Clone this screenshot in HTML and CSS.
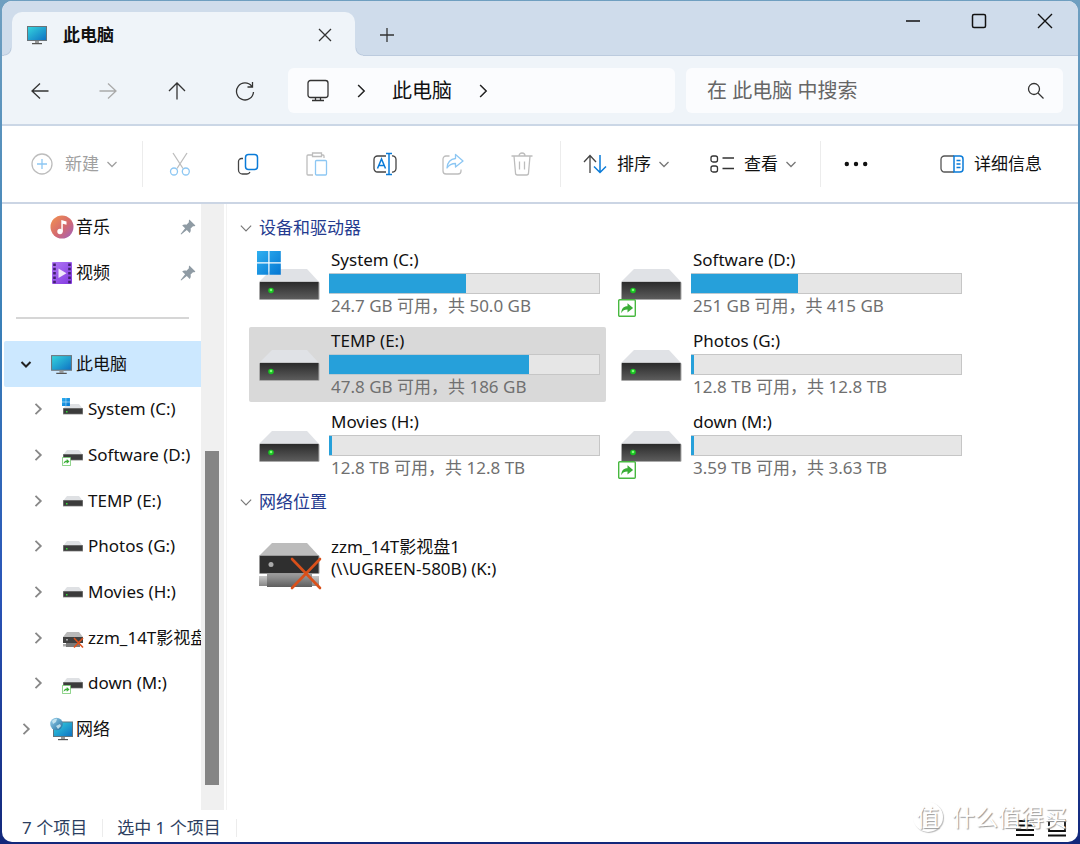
FILE: index.html
```html
<!DOCTYPE html>
<html lang="zh-CN">
<head>
<meta charset="utf-8">
<meta name="viewport" content="width=device-width, initial-scale=1">
<title>此电脑</title>
<link rel="stylesheet" href="styles.css">
</head>
<body>
<svg class="sprite" aria-hidden="true">
  <defs>
    <linearGradient id="screen" x1="0" y1="0" x2="1" y2="1"><stop offset="0" stop-color="#34d3dd"/><stop offset="1" stop-color="#0f73c4"/></linearGradient>
    <linearGradient id="front" x1="0" y1="0" x2="0" y2="1"><stop offset="0" stop-color="#2b2b2b"/><stop offset="1" stop-color="#5c5c5c"/></linearGradient>
    <linearGradient id="win" x1="0" y1="0" x2="1" y2="1"><stop offset="0" stop-color="#2fb0f0"/><stop offset="1" stop-color="#0476d2"/></linearGradient>
    <linearGradient id="music" x1="0" y1="0" x2="1" y2="1"><stop offset="0" stop-color="#f3944f"/><stop offset=".55" stop-color="#d4696f"/><stop offset="1" stop-color="#9c62c4"/></linearGradient>
    <linearGradient id="video" x1="0" y1="0" x2="1" y2="1"><stop offset="0" stop-color="#b078f5"/><stop offset="1" stop-color="#8238e0"/></linearGradient>
    <linearGradient id="pipe" x1="0" y1="0" x2="0" y2="1"><stop offset="0" stop-color="#9c9c9c"/><stop offset=".3" stop-color="#8c8c8c"/><stop offset="1" stop-color="#5e5e5e"/></linearGradient>
    <linearGradient id="pipe-end" x1="0" y1="0" x2="0" y2="1"><stop offset="0" stop-color="#c9c9c9"/><stop offset="1" stop-color="#888"/></linearGradient>
    <linearGradient id="globe" x1="0" y1="0" x2="1" y2="1"><stop offset="0" stop-color="#9fd4ee"/><stop offset="1" stop-color="#1b6c9e"/></linearGradient>
  </defs>
  <symbol id="i-pc" viewBox="0 0 22 22"><rect x="1" y="2" width="20" height="15" fill="#6a7379"/><rect x="2" y="3" width="18" height="13" fill="url(#screen)"/><path d="M9 17h4v2H9z" fill="#999"/><path d="M6 19h10v1.2H6z" fill="#555"/></symbol>
  <symbol id="i-drive" viewBox="0 0 80 75"><path d="M23 23h35l12 13H10z" fill="#e0e2e6"/><rect x="10" y="35.500" width="60.500" height="18.500" rx="1.500" fill="#a9a9a9"/><rect x="11" y="36" width="58.500" height="17" fill="url(#front)"/><circle cx="22" cy="44.500" r="2.800" fill="#19c322"/><circle cx="22" cy="44" r="1.300" fill="#7dff77"/></symbol>
  <symbol id="i-winlogo" viewBox="0 0 24 24"><path fill="url(#win)" d="M0 0h11.300v11.300H0zM12.500 0h11.300v11.300H12.500zM0 12.500h11.300v11.300H0zM12.500 12.500h11.300v11.300H12.500z"/></symbol>
  <symbol id="i-badge" viewBox="0 0 18 18"><rect x=".7" y=".7" width="16.600" height="16.600" rx="1" fill="#fff" stroke="#48b840" stroke-width="1.400"/><path d="M3.200 14.200c.2-4.400 2.300-7 6.300-7V4.200l5.600 4.700-5.600 4.700v-3c-3 0-4.900 1-6.300 3.600z" fill="#3aae36"/></symbol>
  <symbol id="i-netdrive" viewBox="0 0 80 75"><path d="M23 23h35l12 13H10z" fill="#bcbcbc"/><rect x="10" y="35" width="60.500" height="19" rx="1.500" fill="#999"/><rect x="11" y="36" width="58.500" height="17" fill="#2f2f2f"/><circle cx="22" cy="44.500" r="2.500" fill="#aaa"/><path d="M10 56h8v10h-8zM63 56h7v10h-7z" fill="url(#pipe-end)"/><path d="M18 54h45v13H18z" fill="url(#pipe)"/><path d="M43 39l28 29M71 39L43 68" stroke="#d9501a" stroke-width="2.600" stroke-linecap="round"/></symbol>
  <symbol id="i-drive-s" viewBox="0 0 24 24"><path d="M5 7h12l4 5H1z" fill="#dfe1e4"/><rect x="1" y="11" width="20" height="6.500" fill="#999"/><rect x="1.500" y="11.500" width="19" height="5.300" fill="#3b3b3b"/><path d="M4 14h1.500v1.500H4z" fill="#35dd3a"/></symbol>
  <symbol id="i-netdrive-s" viewBox="0 0 24 24"><path d="M5 6h12l4 5H1z" fill="#b9b9b9"/><path d="M1 11h20v6H1z" fill="#404040"/><path d="M4 13h2v1.500H4z" fill="#aaa"/><path d="M1 18h3v2.500H1z" fill="#aaa"/><path d="M4 17h14v4H4z" fill="#7a7a7a"/><path d="M12 12l9 9.500M21 12l-9 9.500" stroke="#e0521c" stroke-width="1.600"/></symbol>
  <symbol id="i-chev-d" viewBox="0 0 14 14"><path d="M2.500 5L7 9.500 11.500 5" fill="none" stroke="currentColor"/></symbol>
  <symbol id="i-chev-r" viewBox="0 0 14 14"><path d="M4.500 1.800L9.800 7l-5.300 5.200" fill="none" stroke="currentColor"/></symbol>
  <symbol id="i-pin" viewBox="0 0 16 16"><path d="M9.300.6l6.100 5.800c-.6.700-1.500.9-2.400.8L10.600 9.600c.4 2 .1 3.400-.9 4.300L6.800 11 1.200 15.400l-.6-.5 4.500-5.600L2.200 6.500c1-1 2.400-1.300 4.300-.8l2.400-2.500c-.2-1-.1-1.900.4-2.600z" fill="#8f9ba4"/></symbol>
</svg>

<div class="window">
  <header class="titlebar">
    <div class="tab">
      <svg class="ic22"><use href="#i-pc"/></svg>
      <h1 class="tab-title">此电脑</h1>
      <button class="icon-btn tab-close" aria-label="关闭标签页"><svg width="14" height="14" viewBox="0 0 14 14"><path d="M1 1l12 12M13 1L1 13"/></svg></button>
    </div>
    <button class="icon-btn new-tab" aria-label="新标签页"><svg width="14" height="14" viewBox="0 0 14 14"><path d="M7 0v14M0 7h14"/></svg></button>
    <div class="caption">
      <button class="icon-btn" aria-label="最小化"><svg width="16" height="16" viewBox="0 0 16 16"><path d="M1 8h14" stroke-width="1.500"/></svg></button>
      <button class="icon-btn" aria-label="最大化"><svg width="16" height="16" viewBox="0 0 16 16"><rect x="1.500" y="1.500" width="13" height="13" rx="1.500" stroke-width="1.500"/></svg></button>
      <button class="icon-btn" aria-label="关闭"><svg width="16" height="16" viewBox="0 0 16 16"><path d="M1 1l14 14M15 1L1 15" stroke-width="1.400"/></svg></button>
    </div>
  </header>

  <div class="navbar">
    <div class="nav-buttons">
      <button class="icon-btn" aria-label="后退"><svg width="18" height="18" viewBox="0 0 18 18"><path d="M17.500 9H1M9 1.500L1 9l8 7.500"/></svg></button>
      <button class="icon-btn off" aria-label="前进" disabled><svg width="18" height="18" viewBox="0 0 18 18"><path d="M.5 9H17M9 1.500L17 9l-8 7.500"/></svg></button>
      <button class="icon-btn" aria-label="上移"><svg width="18" height="18" viewBox="0 0 18 18"><path d="M9 17.500V1M1 9l8-8 8 8"/></svg></button>
      <button class="icon-btn" aria-label="刷新"><svg width="20" height="20" viewBox="0 0 20 20"><path d="M18.500 11A8.500 8.500 0 1 1 16.800 5.300M17.500 1v5h-5"/></svg></button>
    </div>
    <nav class="address" aria-label="地址">
      <svg class="stroke monitor" width="24" height="24" viewBox="0 0 24 24"><rect x="2" y="1.500" width="20" height="17" rx="2.500"/><path d="M9.500 18.500v3M14.500 18.500v3M6 21.500h12"/></svg>
      <svg class="crumb-sep"><use href="#i-chev-r"/></svg>
      <a href="#">此电脑</a>
      <svg class="crumb-sep"><use href="#i-chev-r"/></svg>
    </nav>
    <label class="search">
      <input type="search" placeholder="在 此电脑 中搜索" aria-label="搜索">
      <svg class="stroke" width="18" height="18" viewBox="0 0 18 18"><circle cx="7" cy="7" r="5.500"/><path d="M11 11l5.500 5.500"/></svg>
    </label>
  </div>

  <div class="toolbar">
    <button class="cmd cmd-new" disabled>
      <svg width="24" height="24" viewBox="0 0 24 24"><circle cx="12" cy="12" r="10" stroke="#bdbdbd"/><path d="M12 7v10M7 12h10" stroke="#8dc7f3"/></svg>
      <span>新建</span><svg class="drop"><use href="#i-chev-d"/></svg>
    </button>
    <div class="tools">
      <button class="icon-btn" aria-label="剪切" disabled><svg width="24" height="24" viewBox="0 0 24 24"><path d="M5 1l10 15.500M19 1L9 16.500" stroke="#bdbdbd"/><circle cx="6" cy="19.500" r="3.500" stroke="#8dc7f3"/><circle cx="17.800" cy="19.500" r="3.500" stroke="#8dc7f3"/></svg></button>
      <button class="icon-btn" aria-label="复制"><svg width="24" height="24" viewBox="0 0 24 24"><path d="M7 6.500H5.500a3 3 0 0 0-3 3V18a4 4 0 0 0 4 4h4a3.500 3.500 0 0 0 3.500-2" stroke="#444"/><rect x="9.500" y="2.500" width="12" height="15" rx="3" stroke="#0a7bd8" stroke-width="1.500"/></svg></button>
      <button class="icon-btn" aria-label="粘贴" disabled><svg width="24" height="24" viewBox="0 0 24 24"><path d="M7.500 3H3a1 1 0 0 0-1 1v18a1 1 0 0 0 1 1h5M16.500 3H18a1 1 0 0 1 1 1v2M7.500 1h9v3.500h-9z" stroke="#bdbdbd"/><rect x="10.500" y="8.500" width="11" height="14.500" rx="1" stroke="#8dc7f3"/></svg></button>
      <button class="icon-btn" aria-label="重命名"><svg width="24" height="24" viewBox="0 0 24 24"><path d="M13 4H4.500A3.500 3.500 0 0 0 1 7.500v9A3.500 3.500 0 0 0 4.500 20H13M19 4a3.500 3.500 0 0 1 4 3.500v9A3.500 3.500 0 0 1 19 20" stroke="#444"/><path d="M4.500 16.500L8.500 7l4 9.500M6 13.500h5M13 1.500h6M16 1.500v21M13 22.500h6" stroke="#0a7bd8" stroke-width="1.500"/></svg></button>
      <button class="icon-btn" aria-label="共享" disabled><svg width="24" height="24" viewBox="0 0 24 24"><path d="M8.500 4H5a3 3 0 0 0-3 3v12a3 3 0 0 0 3 3h12a3 3 0 0 0 3-3v-1.500" stroke="#bdbdbd"/><path d="M14.500 2.500L22 9l-7.500 6v-3.500c-4 0-6.500 1.500-8.500 4.500.5-6 3-9 8.500-9.500z" stroke="#8dc7f3" stroke-linejoin="round"/></svg></button>
      <button class="icon-btn" aria-label="删除" disabled><svg width="24" height="24" viewBox="0 0 24 24"><path d="M1.500 4h21M9 4c0-4 6-4 6 0M4 4l1.500 17a2 2 0 0 0 2 2h9a2 2 0 0 0 2-2L20 4M9.500 9.500v8M14.500 9.500v8" stroke="#bdbdbd"/></svg></button>
    </div>
    <div class="views">
      <button class="cmd"><svg width="24" height="24" viewBox="0 0 24 24"><path d="M7 21V4M1 10l6-6.500 6 6.500" stroke="#444"/><path d="M17 3v17.500M11 14.500l6 6 6-6" stroke="#0a7bd8" stroke-width="1.500"/></svg><span>排序</span><svg class="drop"><use href="#i-chev-d"/></svg></button>
      <button class="cmd"><svg width="24" height="24" viewBox="0 0 24 24"><rect x="1" y="4" width="6.500" height="6" rx="2"/><rect x="1" y="14" width="6.500" height="6" rx="2"/><path d="M12.500 6H24M12.500 16.500H24"/></svg><span>查看</span><svg class="drop"><use href="#i-chev-d"/></svg></button>
    </div>
    <button class="icon-btn more" aria-label="更多"><svg width="24" height="24" viewBox="0 0 24 24"><path d="M2.800 12h.01M12 12h.01M21.200 12h.01" stroke="#111" stroke-width="4.400" stroke-linecap="round"/></svg></button>
    <button class="cmd details"><svg width="24" height="24" viewBox="0 0 24 24"><path d="M14 4H4.500A3.500 3.500 0 0 0 1 7.500v9A3.500 3.500 0 0 0 4.500 20H14" stroke="#555"/><path d="M14 4h6a3 3 0 0 1 3 3v10a3 3 0 0 1-3 3h-6zM16.500 8.500h4M16.500 12h4M16.500 15.500h4" stroke="#0a7bd8" stroke-width="1.500"/></svg><span>详细信息</span></button>
  </div>

  <div class="body">
    <aside class="sidebar">
      <ul class="pinned">
        <li><a href="#" class="row"><svg class="ic24" viewBox="0 0 24 24"><circle cx="12" cy="12" r="11.500" fill="url(#music)"/><circle cx="10" cy="16.500" r="2.700" fill="#fff"/><path d="M11.300 16.500V5l5.200 1.500v3.200l-3.700-1v8z" fill="#fff"/></svg><span>音乐</span><svg class="pin"><use href="#i-pin"/></svg></a></li>
        <li><a href="#" class="row"><svg class="ic24" viewBox="0 0 24 24"><rect x="2" y="1" width="20" height="22" rx="1" fill="url(#video)"/><path d="M4.500 2.500v20M19.500 2.500v20" stroke="#41206f" stroke-width="2.600" stroke-dasharray="2.500 1.800"/><path d="M8.500 7.500l8 4.700-8 4.700z" fill="#efe6fb"/></svg><span>视频</span><svg class="pin"><use href="#i-pin"/></svg></a></li>
      </ul>
      <hr class="divider">
      <ul class="tree">
        <li><a href="#" class="node selected"><svg class="twist"><use href="#i-chev-d"/></svg><svg class="ic24" viewBox="0 0 24 24"><use href="#i-pc" x="0" y="1" width="23" height="23"/></svg><span>此电脑</span></a></li>
        <li><a href="#" class="node child"><svg class="twist"><use href="#i-chev-r"/></svg><svg class="ic24" viewBox="0 0 24 24"><use href="#i-drive-s" width="24" height="24"/><use href="#i-winlogo" y="1" width="8" height="8"/></svg><span>System (C:)</span></a></li>
        <li><a href="#" class="node child"><svg class="twist"><use href="#i-chev-r"/></svg><svg class="ic24" viewBox="0 0 24 24"><use href="#i-drive-s" width="24" height="24"/><use href="#i-badge" y="14" width="9" height="9"/></svg><span>Software (D:)</span></a></li>
        <li><a href="#" class="node child"><svg class="twist"><use href="#i-chev-r"/></svg><svg class="ic24"><use href="#i-drive-s"/></svg><span>TEMP (E:)</span></a></li>
        <li><a href="#" class="node child"><svg class="twist"><use href="#i-chev-r"/></svg><svg class="ic24"><use href="#i-drive-s"/></svg><span>Photos (G:)</span></a></li>
        <li><a href="#" class="node child"><svg class="twist"><use href="#i-chev-r"/></svg><svg class="ic24"><use href="#i-drive-s"/></svg><span>Movies (H:)</span></a></li>
        <li><a href="#" class="node child"><svg class="twist"><use href="#i-chev-r"/></svg><svg class="ic24"><use href="#i-netdrive-s"/></svg><span>zzm_14T影视盘1</span></a></li>
        <li><a href="#" class="node child"><svg class="twist"><use href="#i-chev-r"/></svg><svg class="ic24" viewBox="0 0 24 24"><use href="#i-drive-s" width="24" height="24"/><use href="#i-badge" y="14" width="9" height="9"/></svg><span>down (M:)</span></a></li>
        <li><a href="#" class="node"><svg class="twist"><use href="#i-chev-r"/></svg><svg class="ic24" viewBox="0 0 24 24"><rect x="3" y="4.500" width="20" height="15.500" fill="#60757f"/><rect x="4" y="5.500" width="18" height="13.500" fill="url(#screen)"/><path d="M11 20h4v2h-4z" fill="#999"/><path d="M8 22h10v1.200H8z" fill="#555"/><circle cx="6.500" cy="7" r="6.300" fill="url(#globe)"/><path d="M2 4c2-2 4-2.500 5-2L6 5 3 7zM6 9l4-2 1 2-3 3z" fill="#d5edf5" opacity=".8"/></svg><span>网络</span></a></li>
      </ul>
    </aside>
    <div class="scrollbar"><div class="thumb"></div></div>

    <main class="content">
      <section class="group">
        <h2><svg><use href="#i-chev-d"/></svg>设备和驱动器</h2>
        <div class="items">
          <article class="item"><svg class="big" viewBox="0 0 80 75"><use href="#i-drive" width="80" height="75"/><use href="#i-winlogo" x="8" y="5" width="24" height="24"/></svg><div class="info"><h3>System (C:)</h3><div class="bar"><div style="width:50.6%"></div></div><p>24.7 GB 可用，共 50.0 GB</p></div></article>
          <article class="item"><svg class="big" viewBox="0 0 80 75"><use href="#i-drive" width="80" height="75"/><use href="#i-badge" x="7" y="53" width="18" height="18"/></svg><div class="info"><h3>Software (D:)</h3><div class="bar"><div style="width:39.5%"></div></div><p>251 GB 可用，共 415 GB</p></div></article>
          <article class="item active"><svg class="big"><use href="#i-drive"/></svg><div class="info"><h3>TEMP (E:)</h3><div class="bar"><div style="width:74%"></div></div><p>47.8 GB 可用，共 186 GB</p></div></article>
          <article class="item"><svg class="big"><use href="#i-drive"/></svg><div class="info"><h3>Photos (G:)</h3><div class="bar"><div style="width:1%"></div></div><p>12.8 TB 可用，共 12.8 TB</p></div></article>
          <article class="item"><svg class="big"><use href="#i-drive"/></svg><div class="info"><h3>Movies (H:)</h3><div class="bar"><div style="width:1%"></div></div><p>12.8 TB 可用，共 12.8 TB</p></div></article>
          <article class="item"><svg class="big" viewBox="0 0 80 75"><use href="#i-drive" width="80" height="75"/><use href="#i-badge" x="7" y="53" width="18" height="18"/></svg><div class="info"><h3>down (M:)</h3><div class="bar"><div style="width:1%"></div></div><p>3.59 TB 可用，共 3.63 TB</p></div></article>
        </div>
      </section>
      <section class="group">
        <h2><svg><use href="#i-chev-d"/></svg>网络位置</h2>
        <div class="items">
          <article class="item net"><svg class="big"><use href="#i-netdrive"/></svg><h3>zzm_14T影视盘1<br>(\\UGREEN-580B) (K:)</h3></article>
        </div>
      </section>
    </main>
  </div>

  <footer class="status">
    <span>7 个项目</span>
    <span>选中 1 个项目</span>
    <div class="modes">
      <button class="icon-btn" aria-label="详细列表"><svg width="20" height="20" viewBox="0 0 20 20"><path d="M1 3h18M1 7.500h18M1 12h18M1 17h18" stroke="#111" stroke-width="1.800"/></svg></button>
      <button class="icon-btn" aria-label="大图标"><svg width="20" height="20" viewBox="0 0 20 20"><path d="M2 2.500h16v10.500H2zM1 17.500h18" stroke="#111" stroke-width="1.800"/></svg></button>
    </div>
  </footer>
  <div class="watermark"><span class="seal">值</span><span>什么值得买</span></div>
</div>
</body>
</html>
```
FILE: styles.css
```css
* { box-sizing: border-box; }

body {
  margin: 0;
  min-height: 100vh;
  padding: 1px 2px 2px;
  display: flex;
  background: linear-gradient(180deg, #6f9fc0 0%, #3a80b8 38%, #2a55b8 70%, #12277a 100%);
  font-family: "Noto Sans", "Noto Sans CJK SC", sans-serif;
  font-size: 17px;
  line-height: 24px;
  color: #111;
}

h1, h2, h3, p, ul { margin: 0; padding: 0; font-size: 17px; font-weight: 400; }
ul { list-style: none; }
a { color: inherit; text-decoration: none; }
svg { flex: none; display: block; }
.sprite { position: absolute; width: 0; height: 0; }

button {
  border: 0;
  padding: 0;
  background: none;
  font: inherit;
  color: inherit;
}
.icon-btn { display: grid; place-items: center; }
button svg, .stroke { fill: none; stroke: #333; stroke-width: 1.300; }
.off svg { stroke: #aaa; }
.ic22 { width: 22px; height: 22px; }
.ic24 { width: 24px; height: 24px; }

.window {
  position: relative;
  flex: 1;
  min-width: 0;
  display: flex;
  flex-direction: column;
  background: #fff;
  border-radius: 10px;
  overflow: hidden;
}

/* title bar */
.titlebar {
  display: flex;
  height: 55px;
  padding: 11px 0 0 10px;
  background: #cfdceb;
  box-shadow: inset 0 -1px #bccbde;
}
.tab {
  position: relative;
  display: flex;
  align-items: center;
  flex: 0 1 343px;
  padding: 2px 13px 0 14px;
  background: #eff4f9;
  border-radius: 10px 10px 0 0;
}
.tab::before, .tab::after {
  content: "";
  position: absolute;
  bottom: 0;
  width: 8px;
  height: 8px;
}
.tab::before { left: -8px; background: radial-gradient(circle at 0 0, #cfdceb 6px, #bccbde 7px, #eff4f9 8px); }
.tab::after { right: -8px; background: radial-gradient(circle at 100% 0, #cfdceb 6px, #bccbde 7px, #eff4f9 8px); }
.tab-title { margin-left: 15px; font-weight: 700; }
.tab-close { width: 34px; height: 34px; margin-left: auto; }
.new-tab { width: 64px; height: 46px; }
.caption { display: flex; margin: -11px 0 0 auto; }
.caption button { width: 66px; height: 40px; }
.caption svg { stroke: #111; }

/* navigation */
.navbar {
  display: flex;
  align-items: center;
  padding: 12px 15px 11px 4px;
  background: #eff4f9;
  border-bottom: 2px solid #cbd7e6;
  font-size: 20px;
}
.nav-buttons {
  flex: none;
  width: 282px;
  display: grid;
  grid-template-columns: repeat(4, 1fr);
  padding-right: 9px;
}
.nav-buttons button { height: 45px; }
.address, .search {
  display: flex;
  align-items: center;
  height: 45px;
  background: #fbfcfe;
  border-radius: 6px;
}
.address { flex: 1 1 387px; padding-left: 18px; }
.crumb-sep { width: 16px; height: 16px; margin: 0 23px; color: #222; stroke-width: 1.300; }
.search { flex: 1 1 377px; min-width: 0; margin-left: 11px; padding: 0 18px 0 21px; }
.search input {
  flex: 1;
  min-width: 0;
  padding: 0;
  border: 0;
  outline: 0;
  background: none;
  font: inherit;
}
.search input::placeholder { color: #666; opacity: 1; }

/* command bar */
.toolbar {
  display: flex;
  align-items: center;
  height: 78px;
  padding: 0 36px 0 28px;
  border-bottom: 2px solid #cbd5e4;
}
.cmd { display: flex; align-items: center; }
.cmd span { margin-left: 10px; }
.cmd[disabled] { color: #a0a0a0; }
.drop { width: 14px; height: 14px; margin-left: 6px; color: #777; }
.cmd[disabled] .drop { color: #a0a0a0; }
.cmd-new { width: 112px; }
.cmd-new span { margin-left: 11px; }
.tools {
  width: 419px;
  height: 46px;
  padding: 0 4px 0 3px;
  border: solid #ececec;
  border-width: 0 1px;
  display: grid;
  grid-template-columns: repeat(6, 1fr);
}
.views {
  display: flex;
  gap: 39px;
  height: 46px;
  padding: 0 22px;
  border-right: 1px solid #ececec;
}
.more { width: 70px; height: 46px; }
.details { margin-left: auto; }

/* body */
.body { flex: 1; display: flex; min-height: 0; }
.sidebar { width: 199px; overflow: hidden; white-space: nowrap; }
.pinned a, .node { display: flex; align-items: center; height: 100%; gap: 2px; }
.pinned li { height: 46px; }
.row { padding-left: 48px; padding-right: 5px; }
.pin { width: 16px; height: 16px; margin-left: auto; }
.divider { margin: 21px 12px 22px 14px; border: 0; height: 2px; background: #d6d6d6; }
.tree { display: grid; grid-auto-rows: 1fr; height: 411px; }
.node { margin: 0 1px 0 2px; padding-left: 15px; overflow: hidden; }
.node.selected { background: #cce8ff; border-radius: 2px; }
.node.child { padding-left: 27px; }
.twist { width: 14px; height: 14px; margin-right: 15px; color: #888; stroke-width: 1.800; }
.selected .twist { color: #222; stroke-width: 2; }

.scrollbar { display: flex; width: 23px; padding: 247px 5px 25px 4px; background: #f0f0f0; }
.thumb { flex: 1; background: #858585; }

.content { flex: 1; margin-left: 2px; padding: 6px 0 0 11px; border-left: 1px solid #f3f3f3; }
.group h2 { display: flex; align-items: center; height: 36px; color: #243a8f; }
.group h2 svg { width: 16px; height: 16px; margin-right: 5px; color: #777; }
.group + .group { margin-top: 1px; }
.items {
  display: grid;
  grid-template-columns: repeat(auto-fill, 357px);
  gap: 6px 5px;
  padding-left: 11px;
}
.item { display: flex; height: 75px; padding-right: 6px; border-radius: 2px; }
.item.active { background: #d9d9d9; }
.big { width: 80px; height: 75px; }
.info { flex: 1; }
.item h3 { padding-left: 2px; line-height: 27px; }
.item p { padding-left: 2px; color: #707070; }
.bar { height: 21px; padding-right: 1px; background: #e6e6e6; box-shadow: inset 0 0 0 1px #c6c6c6; }
.bar div { height: 100%; background: #26a0da; border: 1px solid #bcc9d0; border-width: 1px 0; }
.net { align-items: center; }
.item.net h3 { line-height: 22px; }

/* status bar */
.status {
  display: flex;
  align-items: center;
  height: 32px;
  padding: 3px 11px 0 20px;
  color: #2c3e60;
}
.status span { padding-right: 15px; margin-right: 14px; border-right: 1px solid #ececec; line-height: 18px; }
.modes { display: flex; gap: 12px; margin-left: auto; }

.watermark {
  position: absolute;
  right: 11px;
  bottom: 10px;
  display: flex;
  align-items: center;
  gap: 9px;
  color: #fff;
  font-size: 23px;
  line-height: 30px;
  text-shadow: 1px 1px 1px #999;
  pointer-events: none;
}
.seal {
  width: 30px;
  height: 30px;
  border-radius: 50%;
  box-shadow: 1px 1px 1px #bbb;
  text-align: center;
}
```
